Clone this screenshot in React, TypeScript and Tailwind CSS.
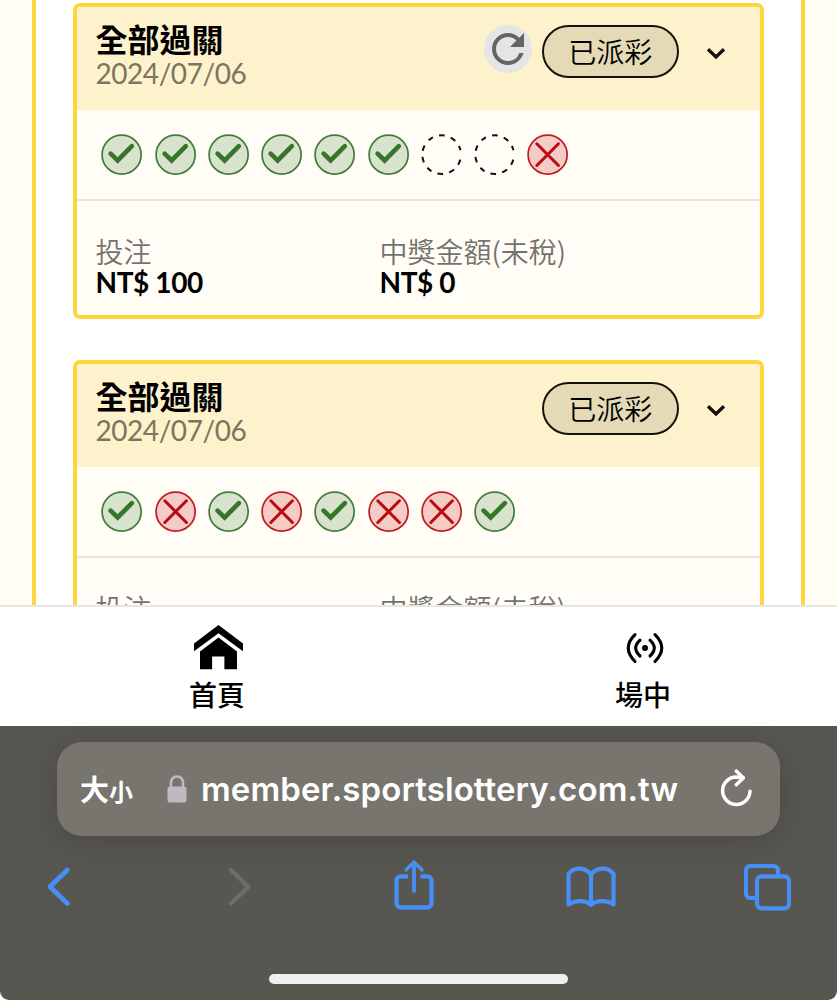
import React from "react";

type Result = "win" | "lose" | "open";

const cjk = "font-['Noto_Sans_CJK_TC',sans-serif]";

function Mark({ kind }: { kind: Result }) {
  return (
    <svg viewBox="-20.6 -20.6 41.2 41.2" className="h-[41.25px] w-[41.25px] shrink-0" fill="none">
      {kind === "win" && (
        <>
          <circle r="19.5" fill="#d8e2cc" stroke="#427c3a" strokeWidth="1.7" />
          <path d="M-11 -1 L-4 5.8 L10.2 -8.4" stroke="#35762b" strokeWidth="4.6" strokeLinecap="round" />
        </>
      )}
      {kind === "lose" && (
        <>
          <circle r="19.5" fill="#f5cbc5" stroke="#c01a22" strokeWidth="1.7" />
          <path d="M-10.8 -10.8 L10.8 10.8 M10.8 -10.8 L-10.8 10.8" stroke="#bb0a12" strokeWidth="3" strokeLinecap="round" />
        </>
      )}
      {kind === "open" && (
        <path d="M18.64 5 A19.3 19.3 0 1 1 18.8 -4.34" stroke="#111" strokeWidth="2" strokeDasharray="5.6 6.24" />
      )}
    </svg>
  );
}

function Ticket({ results, refresh }: { results: Result[]; refresh?: boolean }) {
  return (
    <article className="h-[316px] shrink-0 overflow-hidden rounded-[7px] border-4 border-[#fcd63a] bg-[#fffdf5]">
      <header className="flex h-[102.5px] items-start bg-[#fef2cc] pl-[18.5px] pt-[17px]">
        <div className="-mt-[3px] flex-1">
          <h2 className="text-[32px] font-bold leading-[35px] text-black">全部過關</h2>
          <p className="mt-px font-[Lato,sans-serif] text-[28px] leading-[32px] tracking-[-0.45px] text-[#7d745f]">2024/07/06</p>
        </div>
        {refresh && (
          <button className="mr-[10px] mt-px h-[48px] w-[48px] rounded-full bg-[#e4e5e6]">
            <svg viewBox="0 0 24 24" className="h-[48px] w-[48px]" fill="#646565">
              <path d="M17.65 6.35A7.958 7.958 0 0 0 12 4c-4.42 0-7.99 3.58-7.99 8s3.57 8 7.99 8c3.73 0 6.84-2.55 7.73-6h-2.08A5.99 5.99 0 0 1 12 18c-3.31 0-6-2.69-6-6s2.69-6 6-6c1.66 0 3.14.69 4.22 1.78L13 11h7V4l-2.35 2.35z" />
            </svg>
          </button>
        )}
        <span className="mt-px flex h-[52.5px] w-[137.5px] items-center justify-center rounded-full border-2 border-[#14120c] bg-[#e4dbb6] text-[28px] font-[350] leading-none text-black">
          已派彩
        </span>
        <svg viewBox="0 0 24 16" className="ml-[24.5px] mr-[32.5px] mt-[20.5px] h-[16px] w-[24px]" fill="none">
          <path d="M4 4.2 L12 12 L20 4.2" stroke="#111" strokeWidth="3.4" />
        </svg>
      </header>
      <div className="flex h-[91.5px] items-center gap-3 border-b-2 border-[#e6e4de] pl-[24.4px] pt-px">
        {results.map((r, i) => (
          <Mark key={i} kind={r} />
        ))}
      </div>
      <dl className="flex pl-[18.5px] pt-[34px]">
        <div className="w-[284px]">
          <dt className="text-[28px] font-[350] leading-[32px] text-[#73726d]">投注</dt>
          <dd className="mt-px font-[Lato,sans-serif] text-[28px] font-bold leading-[29px] tracking-[-0.4px] text-black">NT$ 100</dd>
        </div>
        <div>
          <dt className="text-[28px] font-[350] leading-[32px] text-[#73726d]">中獎金額(未稅)</dt>
          <dd className="mt-px font-[Lato,sans-serif] text-[28px] font-bold leading-[29px] tracking-[-0.4px] text-black">NT$ 0</dd>
        </div>
      </dl>
    </article>
  );
}

function TabItem({ label, children }: { label: string; children: React.ReactNode }) {
  return (
    <a className="flex w-[426px] shrink-0 flex-col items-center pt-[18px]">
      {children}
      <span className="mt-[3px] text-[28px] font-medium leading-[36px] text-black">{label}</span>
    </a>
  );
}

const blue = "#468ff7";

export default function App() {
  return (
    <div className={`flex h-[1000px] w-[837px] flex-col overflow-hidden bg-white ${cjk}`}>
      <main className="flex h-[605px] shrink-0 overflow-hidden bg-[#fffdf4] pl-[32px] pr-[32px]">
        <section className="flex flex-1 flex-col gap-[41px] border-x-4 border-[#fcd63a] bg-white px-[37px] pt-[3px]">
          <Ticket refresh results={["win", "win", "win", "win", "win", "win", "open", "open", "lose"]} />
          <Ticket results={["win", "lose", "win", "lose", "win", "lose", "lose", "win"]} />
        </section>
      </main>

      <nav className="flex h-[121px] shrink-0 overflow-hidden border-t-2 border-[#e6e6e6] bg-white pl-[4px]">
        <TabItem label="首頁">
          <svg viewBox="0 0 49 48" className="ml-[3px] h-[48px] w-[49px]" fill="#000">
            <path d="M24.5 0 L49 18.5 V26.3 L24.5 8.2 L0 26.3 V18.5 Z" />
            <path d="M24.5 12.6 L43 26.5 V44.3 H30.4 V31.6 H18.1 V44.3 H6 V26.5 Z" />
          </svg>
        </TabItem>
        <TabItem label="場中">
          <svg viewBox="-24 -23 48 48" className="ml-[3px] h-[48px] w-[48px]" fill="none" stroke="#000" strokeWidth="3.1" strokeLinecap="round">
            <circle r="3" fill="#000" stroke="none" />
            <path d="M-5 -7.8 Q-13.6 0 -5 8 M5 -7.8 Q13.6 0 5 8" />
            <path d="M-10 -13.3 Q-23.5 0 -10 13.5 M10 -13.3 Q23.5 0 10 13.5" />
          </svg>
        </TabItem>
      </nav>

      <footer className="flex h-[274px] shrink-0 flex-col rounded-b-[9px] bg-[#575650] px-[57px] pt-[16px]">
        <div className="flex h-[94px] w-[723px] shrink-0 items-center rounded-[25px] bg-[#77756e] pl-[23px] shadow-[0_6px_30px_rgba(0,0,0,0.16)]">
          <span className="-mt-[2px] flex w-[87px] items-baseline font-bold leading-none text-white">
            <span className="text-[29px]">大</span>
            <span className="text-[24px]">小</span>
          </span>
          <svg viewBox="0 0 20 28" className="h-[28px] w-[20px]" fill="none">
            <path d="M4 13 V7.5 a6 6 0 0 1 12 0 V13" stroke="#bdbbc0" strokeWidth="2.5" />
            <rect x="0.5" y="11.5" width="19" height="16" rx="2.5" fill="#bdbbc0" />
          </svg>
          <span className="ml-[14px] w-[477px] whitespace-nowrap font-[Inter,sans-serif] text-[33px] font-semibold leading-none tracking-[0.1px] text-white">
            member.sportslottery.com.tw
          </span>
          <svg viewBox="0 0 36 42" className="ml-[41px] h-[42px] w-[36px]" fill="none" stroke="#fff" strokeWidth="3.5" strokeLinecap="round" strokeLinejoin="round">
            <path d="M31 23.2 A13.7 13.7 0 1 1 17.3 9 L24 9.6" />
            <path d="M17.3 3 L24.3 9.9 L17.3 16.8" />
          </svg>
        </div>
        <div className="-ml-[12px] mt-[22px] flex h-[56px] w-[750px] shrink-0">
          <svg viewBox="0 0 28 56" className="h-[56px] w-[28px]" fill="none" stroke={blue} strokeWidth="4.8" strokeLinecap="round" strokeLinejoin="round">
            <path d="M22.3 12 L5 28.8 L22.3 45.5" />
          </svg>
          <svg viewBox="0 0 28 56" className="ml-[153px] h-[56px] w-[28px]" fill="none" stroke="#6e6d68" strokeWidth="4.4" strokeLinecap="round" strokeLinejoin="round">
            <path d="M5 12 L22.3 28.8 L5 45.5" />
          </svg>
          <svg viewBox="0 0 42 56" className="ml-[139px] h-[56px] w-[42px]" fill="none" stroke={blue} strokeWidth="4.3">
            <path d="M15 18.3 H8 a4.5 4.5 0 0 0 -4.5 4.5 V45 a4.5 4.5 0 0 0 4.5 4.5 H34 a4.5 4.5 0 0 0 4.5 -4.5 V22.8 a4.5 4.5 0 0 0 -4.5 -4.5 H27.5" />
            <path d="M21 33 V5" strokeWidth="3.8" strokeLinecap="round" />
            <path d="M13 12 L21 4 L29 12" strokeWidth="3.3" strokeLinecap="round" strokeLinejoin="round" />
          </svg>
          <svg viewBox="0 0 52 56" className="ml-[130px] h-[56px] w-[52px]" fill="none" stroke={blue} strokeWidth="4.2" strokeLinejoin="round">
            <path d="M26 17 C21 9 9 8.5 3.5 16 V46.5 C10 42 21 42 26 47 C31 42 42 42 48.5 46.5 V16 C43 8.5 31 9 26 17 V47" />
          </svg>
          <svg viewBox="0 0 48 56" className="ml-[126px] h-[56px] w-[48px]" fill="none" stroke={blue} strokeWidth="4.2">
            <path d="M12 40 H7.5 a4.5 4.5 0 0 1 -4.5 -4.5 V12.5 a4.5 4.5 0 0 1 4.5 -4.5 H30.5 a4.5 4.5 0 0 1 4.5 4.5 V18" />
            <rect x="14" y="18.3" width="32" height="32" rx="4.5" />
          </svg>
        </div>
        <div className="ml-[212px] mt-[60px] h-[10px] w-[299px] shrink-0 rounded-full bg-[#efefef]" />
      </footer>
    </div>
  );
}
